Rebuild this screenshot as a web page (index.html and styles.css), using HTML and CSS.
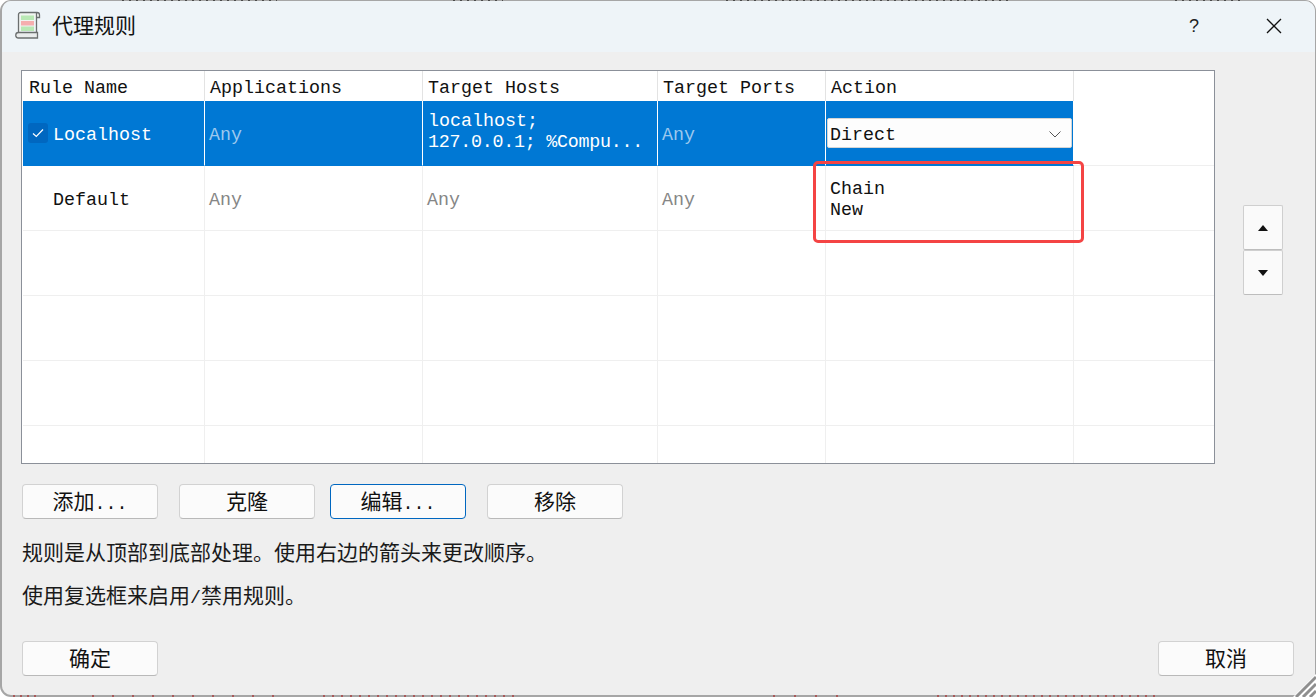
FILE: index.html
```
<!DOCTYPE html>
<html lang="zh-CN">
<head>
<meta charset="utf-8">
<title>代理规则</title>
<link rel="stylesheet" href="styles.css">
</head>
<body>
<div class="window">
  <header class="titlebar">
    <svg class="app-icon" width="26" height="30" viewBox="0 0 26 30">
      <path d="M3.500 23V3.500a2 2 0 0 1 2-2H22a2.500 2.500 0 0 1 2.500 2.500V6.500H21.500M21.500 2V23" fill="#f1f4f1" stroke="#6b6f6f" stroke-width="1.300"/>
      <rect x="6" y="4.500" width="13" height="4.500" fill="#b9e8b4"/>
      <rect x="6" y="10" width="13" height="4.500" fill="#f6aeae"/>
      <rect x="6" y="15.500" width="13" height="4.500" fill="#b9e8b4"/>
      <path d="M3.500 21.500H22.500v5.500H3.500a2.750 2.750 0 0 1 0-5.500z" fill="#e9ecec" stroke="#6b6f6f" stroke-width="1.300"/>
    </svg>
    <span class="title-text">代理规则</span>
    <span class="help">?</span>
    <svg class="close" width="16" height="16" viewBox="0 0 16 16"><path d="M1 1L15 15M15 1L1 15" stroke="#111" stroke-width="1.300" fill="none"/></svg>
  </header>

  <main class="content">
    <div class="table-row">
      <div class="panel">
        <table class="rules">
          <colgroup><col class="c1"><col class="c2"><col class="c3"><col class="c4"><col class="c5"><col></colgroup>
          <thead>
            <tr><th class="first-head">Rule Name</th><th>Applications</th><th>Target Hosts</th><th>Target Ports</th><th>Action</th><th class="filler"></th></tr>
          </thead>
          <tbody>
            <tr class="selected">
              <td class="name-td"><span class="name-cell"><span class="check"><svg width="12" height="10" viewBox="0 0 12 10"><path d="M1 5.500L4.300 8.500L11 1.500" stroke="#fff" stroke-width="1.200" fill="none"/></svg></span><span class="name-label">Localhost</span></span></td>
              <td class="any">Any</td>
              <td class="hosts">localhost;<br><span class="host-list">127.0.0.1; %Compu...</span></td>
              <td class="any">Any</td>
              <td class="action-cell"><div class="combo"><span class="combo-text">Direct</span><svg class="chevron" width="12" height="7" viewBox="0 0 12 7"><path d="M0.500 0.500L6 6L11.500 0.500" stroke="#555" stroke-width="1" fill="none"/></svg></div></td>
              <td class="filler"></td>
            </tr>
            <tr>
              <td><span class="plain-name">Default</span></td>
              <td class="any">Any</td>
              <td class="any">Any</td>
              <td class="any">Any</td>
              <td class="options">Chain<br>New</td>
              <td class="filler"></td>
            </tr>
            <tr><td></td><td></td><td></td><td></td><td></td><td class="filler"></td></tr>
            <tr><td></td><td></td><td></td><td></td><td></td><td class="filler"></td></tr>
            <tr><td></td><td></td><td></td><td></td><td></td><td class="filler"></td></tr>
            <tr class="last"><td></td><td></td><td></td><td></td><td></td><td class="filler"></td></tr>
          </tbody>
        </table>
        <div class="highlight"></div>
      </div>
      <div class="order">
        <button class="order-btn" type="button" aria-label="上移"><svg width="10" height="6" viewBox="0 0 10 6"><path d="M5 0L10 6H0z" fill="#111"/></svg></button>
        <button class="order-btn" type="button" aria-label="下移"><svg width="10" height="6" viewBox="0 0 10 6"><path d="M0 0H10L5 6z" fill="#111"/></svg></button>
      </div>
    </div>

    <div class="actions">
      <button class="btn gap-wide" type="button">添加<span class="half">...</span></button>
      <button class="btn gap-narrow" type="button">克隆</button>
      <button class="btn focused gap-wide" type="button">编辑<span class="half">...</span></button>
      <button class="btn" type="button">移除</button>
    </div>

    <p class="note first">规则是从顶部到底部处理。使用右边的箭头来更改顺序。</p>
    <p class="note second">使用复选框来启用<span class="half">/</span>禁用规则。</p>

    <div class="footer">
      <button class="btn" type="button">确定</button>
      <button class="btn" type="button">取消</button>
    </div>
  </main>
</div>
<svg class="resize-corner" width="24" height="24" viewBox="0 0 24 24">
  <path d="M1 24L24 1V24Z" fill="#ffffff"/>
  <path d="M4 24L24 4" stroke="#8f8f8f" stroke-width="3"/>
  <path d="M11 24L24 11" stroke="#8f8f8f" stroke-width="3"/>
  <path d="M18 24L24 18" stroke="#8f8f8f" stroke-width="3"/>
</svg>
<div class="edge-top"></div>
<div class="edge-bottom"></div>
</body>
</html>
```

FILE: styles.css
```
* { box-sizing: border-box; }

html, body {
  margin: 0;
  width: 1316px;
  height: 697px;
  overflow: hidden;
  background: #ffffff;
}

body {
  position: relative;
  font-family: "Liberation Mono", "Noto Sans CJK SC", monospace;
  font-size: 18.33px;
  color: #111;
}

.window {
  position: relative;
  width: 1316px;
  height: 697px;
  display: flex;
  flex-direction: column;
  background: #efefef;
  border-style: solid;
  border-color: #a6a6a6;
  border-width: 1px 1px 2px 2px;
  border-radius: 11px;
  overflow: hidden;
}

.edge-top,
.edge-bottom {
  position: absolute;
  left: 0;
  width: 1316px;
  background-repeat: no-repeat;
  pointer-events: none;
}

.edge-top {
  top: 0;
  height: 1px;
  background-image:
    repeating-linear-gradient(90deg, #4a4a4a 0 2px, transparent 2px 7px),
    repeating-linear-gradient(90deg, #4a4a4a 0 2px, transparent 2px 7px),
    repeating-linear-gradient(90deg, #4a4a4a 0 2px, transparent 2px 7px),
    repeating-linear-gradient(90deg, #4a4a4a 0 2px, transparent 2px 7px);
  background-size: 155px 1px, 50px 1px, 285px 1px, 65px 1px;
  background-position: 122px 0, 453px 0, 726px 0, 1175px 0;
}

.edge-bottom {
  bottom: 0;
  height: 2px;
  background-image:
    repeating-linear-gradient(90deg, #a85a5a 0 2px, transparent 2px 7px),
    repeating-linear-gradient(90deg, #a85a5a 0 2px, transparent 2px 20px),
    repeating-linear-gradient(90deg, #a85a5a 0 2px, transparent 2px 9px),
    repeating-linear-gradient(90deg, #a85a5a 0 2px, transparent 2px 21px),
    repeating-linear-gradient(90deg, #a85a5a 0 2px, transparent 2px 8px);
  background-size: 25px 2px, 200px 2px, 198px 2px, 84px 2px, 223px 2px;
  background-position: 13px 0, 92px 0, 323px 0, 773px 0, 937px 0;
}

.titlebar {
  flex: none;
  height: 51px;
  display: flex;
  align-items: center;
  padding-left: 13px;
  background: #eef4f8;
}

.app-icon { flex: none; margin-bottom: 1px; }

.title-text {
  margin: 0 0 5px 11px;
  font-size: 21px;
  font-family: "Noto Sans CJK SC", sans-serif;
  font-weight: 400;
}

.help {
  margin-left: auto;
  font-family: "Liberation Sans", sans-serif;
  font-size: 18px;
  color: #222;
}

.close { margin: 0 33px 2px 67px; }

.content {
  flex: 1;
  display: flex;
  flex-direction: column;
  padding: 18px 21px 0 20px;
  min-height: 0;
}

.table-row { display: flex; align-items: flex-start; }

.panel {
  position: relative;
  margin-left: -1px;
  width: 1194px;
  height: 394px;
  flex: none;
  border: 1px solid #8b9099;
  padding-left: 1px;
  background: #fff;
}

.rules {
  width: 100%;
  table-layout: fixed;
  border-collapse: separate;
  border-spacing: 0;
}

.c1 { width: 182px; }
.c2 { width: 218px; }
.c3 { width: 235px; }
.c4 { width: 168px; }
.c5 { width: 248px; }

.rules th {
  height: 30px;
  padding: 4px 0 0 5px;
  font-weight: 400;
  text-align: left;
  white-space: nowrap;
  border-right: 1px solid #e3e3e3;
  background: #fff;
  vertical-align: middle;
}

.rules th.first-head { padding-left: 6px; }

.rules th.filler, .rules td.filler { border-right: 0; }

.rules td {
  height: 65px;
  padding: 4px 0 0 4px;
  border-right: 1px solid #efefef;
  border-bottom: 1px solid #efefef;
  vertical-align: middle;
  white-space: nowrap;
  overflow: hidden;
  line-height: 21px;
}

.rules .last td { height: 37px; border-bottom: 0; }

.selected td {
  background: #0078d4;
  color: #fff;
  border-right-color: #fff;
  border-bottom-color: #0078d4;
}

.selected td.filler { background: #fff; border-bottom-color: #efefef; }

.any { color: #868686; }
.selected .any { color: #9cc8ee; }

.rules td.name-td { padding-top: 0; }

.name-cell { display: flex; align-items: center; margin-left: 1px; }

.check {
  flex: none;
  width: 20px;
  height: 20px;
  margin-right: 5px;
  display: flex;
  align-items: center;
  justify-content: center;
  background: #0067c0;
  border-radius: 3px;
}

.name-label { margin-top: 4px; }

.plain-name { margin-left: 26px; }

.rules td.hosts { padding: 0 0 2px 5px; }

.host-list { letter-spacing: -0.25px; }

.rules td.action-cell { padding: 0 1px 0 1px; }

.combo {
  height: 30px;
  display: flex;
  align-items: center;
  justify-content: space-between;
  padding: 0 10px 0 2px;
  background: #fdfdfd;
  border: 1px solid #d5d5d5;
  border-radius: 2px;
  color: #111;
}

.combo-text { margin-top: 4px; }
.chevron { margin-top: 2px; }

.rules td.options { padding: 3px 0 0 4px; }

.highlight {
  position: absolute;
  left: 791px;
  top: 90px;
  width: 271px;
  height: 82px;
  border: 3px solid #f44444;
  border-radius: 5px;
  pointer-events: none;
}

.order {
  display: flex;
  flex-direction: column;
  margin: 135px 0 0 28px;
}

.order-btn {
  width: 40px;
  height: 45px;
  padding: 0;
  display: flex;
  align-items: center;
  justify-content: center;
  background: #fafafa;
  border: 1px solid #cfcfcf;
  border-bottom-color: #bdbdbd;
  border-radius: 2px;
}

.actions { display: flex; margin-top: 20px; }

.btn {
  flex: none;
  width: 136px;
  height: 35px;
  padding: 4px 0 0;
  font: inherit;
  font-size: 21px;
  line-height: 1;
  color: #111;
  background: #fbfbfb;
  border: 1px solid #d2d2d2;
  border-bottom-color: #b9b9b9;
  border-radius: 4px;
}

.btn.focused { border: 1px solid #0067c0; }

.half { font-size: 18.33px; }

.gap-wide { margin-right: 21px; }
.gap-narrow { margin-right: 15px; }

.note {
  margin: 0;
  height: 22px;
  line-height: 22px;
  font-size: 21px;
  color: #1a1a1a;
  padding-top: 2px;
  box-sizing: content-box;
}

.note.first { margin-top: 23px; }
.note.second { margin-top: 19px; }

.footer {
  display: flex;
  justify-content: space-between;
  margin-top: 32px;
}

.resize-corner {
  position: absolute;
  right: 0;
  bottom: 0;
  z-index: 5;
}
```
